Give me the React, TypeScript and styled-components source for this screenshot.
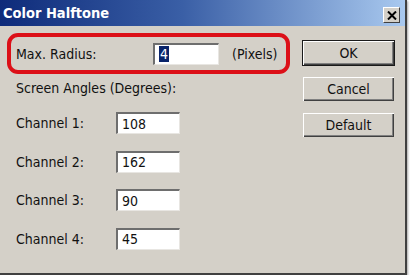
import * as React from 'react';
import styled, { createGlobalStyle } from 'styled-components';

const GlobalStyle = createGlobalStyle`
  html, body {
    margin: 0;
    padding: 0;
    background: #ffffff;
  }
  body {
    font-family: 'DejaVu Sans Condensed', 'DejaVu Sans', sans-serif;
  }
`;

const Window = styled.div`
  width: 407px;
  height: 275px;
  box-sizing: border-box;
  background: #d4d0c8;
  border-right: 2px solid #404040;
  border-bottom: 2px solid #404040;
  box-shadow: 1px 1px 2px rgba(0, 0, 0, 0.35);
  display: flex;
  flex-direction: column;
  font-size: 14px;
  color: #111111;
`;

const TitleBar = styled.div`
  height: 26px;
  flex: none;
  display: flex;
  align-items: center;
  justify-content: space-between;
  padding: 0 5px 0 3px;
  background: linear-gradient(to right, #0e2b7a 0%, #3a5fa6 45%, #a9c9ef 100%);
`;

const TitleText = styled.span`
  color: #ffffff;
  font-weight: bold;
  font-size: 14.5px;
`;

const CloseButton = styled.div`
  width: 17px;
  height: 16px;
  margin-top: 4px;
  background: #d4d0c8;
  box-sizing: border-box;
  border-top: 1px solid #ffffff;
  border-left: 1px solid #ffffff;
  border-right: 1px solid #404040;
  border-bottom: 1px solid #404040;
  display: flex;
  align-items: center;
  justify-content: center;
`;

const Body = styled.div`
  flex: 1;
  display: flex;
  padding: 7px 0 0 7px;
`;

const FormColumn = styled.div`
  width: 283px;
  display: flex;
  flex-direction: column;
`;

const HighlightRow = styled.div`
  height: 41px;
  box-sizing: border-box;
  border: 4px solid #dc1018;
  border-radius: 11px;
  display: flex;
  align-items: center;
  padding-left: 5px;
`;

const Label = styled.span<{ $width?: number }>`
  display: inline-block;
  width: ${(p) => (p.$width ? `${p.$width}px` : 'auto')};
  flex: none;
`;

const Field = styled.div<{ $width: number }>`
  width: ${(p) => p.$width}px;
  height: 22px;
  box-sizing: border-box;
  background: #ffffff;
  border-top: 2px solid #6e6e6e;
  border-left: 2px solid #6e6e6e;
  border-right: 1px solid #e8e6e2;
  border-bottom: 1px solid #e8e6e2;
  display: flex;
  align-items: center;
  padding-left: 4px;
  font-size: 14px;
`;

const Selected = styled.span`
  background: #0a246a;
  color: #ffffff;
  padding: 0 1px;
  line-height: 16px;
`;

const Unit = styled.span`
  margin-left: 13px;
`;

const SectionLabel = styled.div`
  margin-top: 5px;
  padding-left: 9px;
  height: 18px;
  line-height: 18px;
`;

const ChannelList = styled.div`
  display: flex;
  flex-direction: column;
  gap: 16.5px;
  padding-top: 15px;
`;

const ChannelRow = styled.div`
  display: flex;
  align-items: center;
  padding-left: 9px;
`;

const ButtonColumn = styled.div`
  display: flex;
  flex-direction: column;
  gap: 10px;
  margin-left: 12px;
  padding-top: 7px;
`;

const DialogButton = styled.div<{ $default?: boolean }>`
  width: 93px;
  height: 26px;
  box-sizing: border-box;
  display: flex;
  align-items: center;
  justify-content: center;
  background: #d4d0c8;
  border: 1px solid ${(p) => (p.$default ? '#1a1a1a' : 'transparent')};
  box-shadow: inset 1px 1px 0 #ffffff, inset -1px -1px 0 #404040,
    inset -2px -2px 0 #808080;
  font-size: 14px;
`;

const channels = [
  { name: 'Channel 1:', value: '108' },
  { name: 'Channel 2:', value: '162' },
  { name: 'Channel 3:', value: '90' },
  { name: 'Channel 4:', value: '45' },
];

export default function App() {
  return (
    <>
      <GlobalStyle />
      <Window>
        <TitleBar>
          <TitleText>Color Halftone</TitleText>
          <CloseButton>
            <svg width="10" height="9" viewBox="0 0 10 9">
              <path d="M1 0.5 L9 8.5 M9 0.5 L1 8.5" stroke="#000" strokeWidth="2" />
            </svg>
          </CloseButton>
        </TitleBar>
        <Body>
          <FormColumn>
            <HighlightRow>
              <Label $width={137}>Max. Radius:</Label>
              <Field $width={66}>
                <Selected>4</Selected>
              </Field>
              <Unit>(Pixels)</Unit>
            </HighlightRow>
            <SectionLabel>Screen Angles (Degrees):</SectionLabel>
            <ChannelList>
              {channels.map((c) => (
                <ChannelRow key={c.name}>
                  <Label $width={100}>{c.name}</Label>
                  <Field $width={64}>{c.value}</Field>
                </ChannelRow>
              ))}
            </ChannelList>
          </FormColumn>
          <ButtonColumn>
            <DialogButton $default>OK</DialogButton>
            <DialogButton>Cancel</DialogButton>
            <DialogButton>Default</DialogButton>
          </ButtonColumn>
        </Body>
      </Window>
    </>
  );
}
